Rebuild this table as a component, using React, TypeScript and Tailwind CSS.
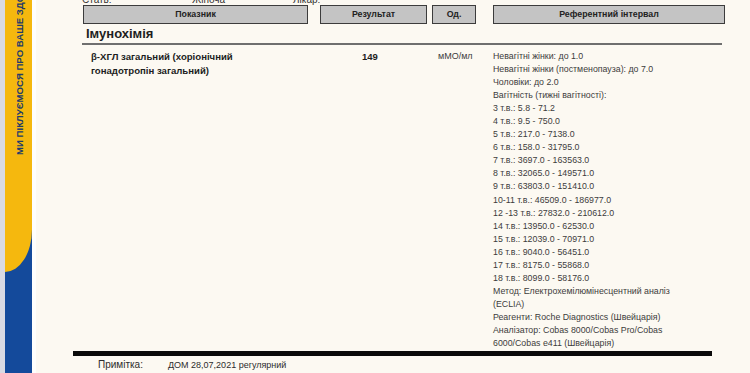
const refLines = [
  'Невагітні жінки: до 1.0',
  'Невагітні жінки (постменопауза): до 7.0',
  'Чоловіки: до 2.0',
  'Вагітність (тижні вагітності):',
  '3 т.в.: 5.8 - 71.2',
  '4 т.в.: 9.5 - 750.0',
  '5 т.в.: 217.0 - 7138.0',
  '6 т.в.: 158.0 - 31795.0',
  '7 т.в.: 3697.0 - 163563.0',
  '8 т.в.: 32065.0 - 149571.0',
  '9 т.в.: 63803.0 - 151410.0',
  '10-11 т.в.: 46509.0 - 186977.0',
  '12 -13 т.в.: 27832.0 - 210612.0',
  '14 т.в.: 13950.0 - 62530.0',
  '15 т.в.: 12039.0 - 70971.0',
  '16 т.в.: 9040.0 - 56451.0',
  '17 т.в.: 8175.0 - 55868.0',
  '18 т.в.: 8099.0 - 58176.0',
  'Метод: Електрохемілюмінесцентний аналіз',
  '(ECLIA)',
  'Реагенти: Roche Diagnostics (Швейцарія)',
  'Аналізатор: Cobas 8000/Cobas Pro/Cobas',
  '6000/Cobas e411 (Швейцарія)',
];

function HeadCell({ label, className }: { label: string; className: string }) {
  return (
    <div
      className={`h-[19px] flex items-center justify-center bg-[#c4c4c4] border-[1.5px] border-[#3c3c3c] text-[8.8px] font-bold text-[#222] ${className}`}
    >
      {label}
    </div>
  );
}

export default function App() {
  return (
    <div className="w-[750px] h-[373px] overflow-hidden flex bg-[#fcf9f2] font-['Liberation_Sans',Arial,sans-serif]">
      {/* left brochure edge */}
      <div className="w-[5px] shrink-0 bg-[#d9dae3]" />
      <div className="w-[27px] shrink-0 flex flex-col bg-[#144a9b]">
        <div className="h-[272px] bg-[#f5b80e] rounded-br-[28px_44px] flex flex-col">
          <div className="h-[155px] overflow-hidden flex flex-col justify-end items-center pl-[4px]">
            <span className="[writing-mode:vertical-rl] rotate-180 whitespace-nowrap text-[9.6px] font-bold text-[#213a6b]">
              МИ ПІКЛУЄМОСЯ ПРО ВАШЕ ЗДОРОВ'Я
            </span>
          </div>
        </div>
      </div>
      <div className="w-[4px] shrink-0 bg-[#fefefd]" />

      {/* report page */}
      <div className="flex-1 flex flex-col pl-[37px] pr-[33px]">
        <div className="h-[5px] text-[10px] text-[#333]">
          <div className="flex -mt-[6px] leading-[12px]">
            <span className="ml-[9px] w-[110px]">Стать:</span>
            <span className="w-[101px]">Жіноча</span>
            <span>Лікар:</span>
          </div>
        </div>

        <div className="flex">
          <HeadCell label="Показник" className="ml-[10px] w-[225px]" />
          <HeadCell label="Результат" className="ml-[12px] w-[107px]" />
          <HeadCell label="Од." className="ml-[5px] w-[44px]" />
          <HeadCell label="Референтний інтервал" className="ml-[17px] w-[232px]" />
        </div>

        <div className="ml-[9px] w-[640px] mt-[5px] h-[16px] border-b-2 border-[#6f6f6f] flex items-end">
          <span className="ml-[4px] text-[13px] font-bold text-[#1e1e1e] leading-[16px] pb-[1px]">Імунохімія</span>
        </div>

        <div className="flex mt-[5px] leading-[13.05px]">
          <div className="ml-[18px] w-[200px] text-[9.6px] font-bold text-[#1d1d1d] leading-[13.5px]">
            β-ХГЛ загальний (хоріонічний
            <br />
            гонадотропін загальний)
          </div>
          <div className="ml-[71px] w-[76px] text-[9.5px] font-bold text-[#1d1d1d]">149</div>
          <div className="w-[55px] text-[9px] text-[#3c3c3c]">мМО/мл</div>
          <div className="flex flex-col text-[8.8px] text-[#3c3c3c]">
            {refLines.map((l) => (
              <span key={l} className="whitespace-nowrap">
                {l}
              </span>
            ))}
          </div>
        </div>

        <div className="w-[639px] h-[5px] bg-[#0a0a0a] mt-[1px]" />

        <div className="flex mt-[4px] text-[9px] text-[#2c2c2c] leading-[10px]">
          <span className="ml-[25px] w-[70px] text-[10px]">Примітка:</span>
          <span>ДОМ 28,07,2021 регулярний</span>
        </div>
      </div>

      {/* right edge */}
      <div className="w-[5px] shrink-0 bg-[#d8d8dd]" />
    </div>
  );
}
